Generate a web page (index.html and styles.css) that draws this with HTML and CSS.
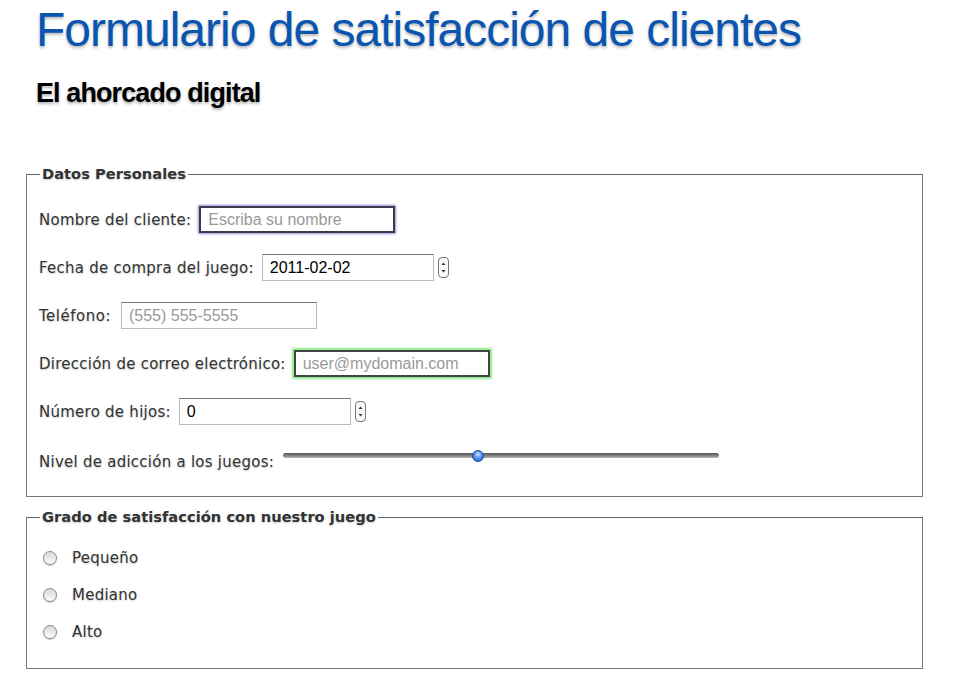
FILE: index.html
```html
<!DOCTYPE html>
<html lang="es">
<head>
<meta charset="utf-8">
<title>Formulario de satisfacción de clientes</title>
<link rel="stylesheet" href="styles.css">
</head>
<body>
<div class="page">
  <header class="header">
    <h1 class="title">Formulario de satisfacción de clientes</h1>
    <h2 class="subtitle">El ahorcado digital</h2>
  </header>
  <form class="form">
    <fieldset class="box box-personal">
      <legend class="legend">Datos Personales</legend>
      <div class="rows">
        <div class="row">
          <label class="label" for="nombre">Nombre del cliente:</label>
          <input class="field field-focus" id="nombre" type="text" placeholder="Escriba su nombre">
        </div>
        <div class="row">
          <label class="label" for="fecha">Fecha de compra del juego:</label>
          <input class="field field-short" id="fecha" type="text" value="2011-02-02">
          <span class="spin"><svg width="11" height="21" viewBox="0 0 11 21"><rect x="0.5" y="0.5" width="10" height="20" rx="3.5" fill="#fafafa" stroke="#777"/><path d="M3.5 8 L5.5 5.5 L7.5 8 Z" fill="#333"/><path d="M3.5 13 L5.5 15.5 L7.5 13 Z" fill="#333"/></svg></span>
        </div>
        <div class="row">
          <label class="label label-tel" for="tel">Teléfono:</label>
          <input class="field" id="tel" type="text" placeholder="(555) 555-5555">
        </div>
        <div class="row">
          <label class="label" for="email">Dirección de correo electrónico:</label>
          <input class="field field-valid" id="email" type="text" placeholder="user@mydomain.com">
        </div>
        <div class="row">
          <label class="label" for="hijos">Número de hijos:</label>
          <input class="field field-short" id="hijos" type="text" value="0">
          <span class="spin"><svg width="11" height="21" viewBox="0 0 11 21"><rect x="0.5" y="0.5" width="10" height="20" rx="3.5" fill="#fafafa" stroke="#777"/><path d="M3.5 8 L5.5 5.5 L7.5 8 Z" fill="#333"/><path d="M3.5 13 L5.5 15.5 L7.5 13 Z" fill="#333"/></svg></span>
        </div>
        <div class="row row-range">
          <label class="label" for="nivel">Nivel de adicción a los juegos:</label>
          <input class="range" id="nivel" type="range" min="0" max="9" value="4">
        </div>
      </div>
    </fieldset>
    <fieldset class="box box-grade">
      <legend class="legend">Grado de satisfacción con nuestro juego</legend>
      <div class="radios">
        <label class="radio-row"><input class="radio" type="radio" name="grado"><span class="label">Pequeño</span></label>
        <label class="radio-row"><input class="radio" type="radio" name="grado"><span class="label">Mediano</span></label>
        <label class="radio-row"><input class="radio" type="radio" name="grado"><span class="label">Alto</span></label>
      </div>
    </fieldset>
  </form>
</div>
</body>
</html>
```
FILE: styles.css
```css
* { box-sizing: border-box; }
html, body { margin: 0; padding: 0; background: #fff; }
body { font-family: "DejaVu Sans", "Liberation Sans", sans-serif; color: #333; }

.page { padding: 0 37px 0 26px; }

.header { padding-left: 10px; }
.title {
  margin: 0;
  padding-top: 6px;
  font-family: "Liberation Sans", Arial, sans-serif;
  font-weight: normal;
  font-size: 48px;
  line-height: 48px;
  letter-spacing: -1px;
  color: #0a55b0;
  text-shadow: 0 2px 3px rgba(0,0,0,0.28);
}
.subtitle {
  margin: 24px 0 0;
  font-family: "Liberation Sans", Arial, sans-serif;
  font-weight: bold;
  font-size: 27px;
  line-height: 30px;
  letter-spacing: -0.9px;
  color: #000;
  text-shadow: 0 2px 3px rgba(0,0,0,0.3);
}

.form { margin-top: 57px; }

.box {
  margin: 0;
  padding: 0 0 0 12px;
  border: 1px solid #777;
  border-top-color: #666;
  min-width: 0;
}
.legend {
  padding: 0 2px;
  margin-left: 1px;
  font-weight: bold;
  font-size: 14.7px;
  line-height: 18px;
  color: #333;
  text-shadow: 0 1px 2px rgba(0,0,0,0.2);
}

.rows { display: flex; flex-direction: column; gap: 21px; padding: 23px 0 23px; }
.row { display: flex; align-items: center; height: 27px; }
.label {
  font-size: 15px;
  letter-spacing: 0.25px;
  color: #333;
  text-shadow: 0 1px 2px rgba(0,0,0,0.22);
  margin-right: 8px;
}
.label-tel { margin-right: 10px; letter-spacing: 0.5px; }

.field {
  width: 196px;
  height: 27px;
  padding: 0 7px;
  font-family: "Liberation Sans", Arial, sans-serif;
  font-size: 16px;
  color: #000;
  background: #fff;
  border: 1px solid #bbb;
  border-top-color: #777;
  outline: none;
  margin: 0;
}
.field::placeholder { color: #999; }
.field-short { width: 172px; }
.field-focus {
  border: 2px solid #3a3a4a;
  box-shadow: 0 0 2px 1px #9a90e0;
}
.field-valid {
  border: 2px solid #444;
  box-shadow: 0 0 2px 2px #8de98a;
}
.spin { display: flex; margin-left: 4px; }

.row-range { height: 27px; }
.row-range .label { position: relative; top: 2px; margin-right: 9px; }
.range {
  -webkit-appearance: none;
  appearance: none;
  width: 436px;
  height: 14px;
  margin: 0;
  background: transparent;
  position: relative;
  top: -4px;
}
.range::-webkit-slider-runnable-track {
  height: 5px;
  border-radius: 3px;
  background: linear-gradient(#555, #888 60%, #bbb);
}
.range::-webkit-slider-thumb {
  -webkit-appearance: none;
  width: 12px;
  height: 12px;
  margin-top: -3px;
  border-radius: 50%;
  border: 1px solid #2b4a88;
  background: radial-gradient(circle at 50% 35%, #cfe6ff 0, #4c93ef 45%, #1b5fd0 100%);
}

.box-grade { margin-top: 11px; }
.radios { display: flex; flex-direction: column; gap: 15px; padding: 21px 0 25px 4px; }
.radio-row { display: flex; align-items: center; height: 22px; }
.radio {
  -webkit-appearance: none;
  appearance: none;
  width: 14px;
  height: 14px;
  margin: 0 15px 0 0;
  border-radius: 50%;
  border: 1px solid #8a8a8a;
  background: linear-gradient(#d8d8d8, #fdfdfd);
  box-shadow: 0 1px 1px rgba(0,0,0,0.2);
}
```
